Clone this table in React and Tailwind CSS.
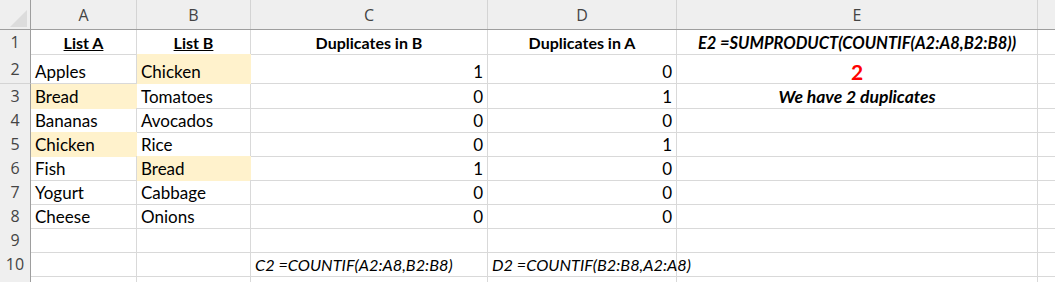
import React from "react";

const COLS = "grid-cols-[31px_106px_114px_237px_189px_361px_1fr]";
const FONT = { fontFamily: "Lato, 'Liberation Sans', sans-serif" };

const rows = [
  { h: "h-[24px]", cells: [
    { t: "List A", cls: "justify-center font-bold underline text-[16px]" },
    { t: "List B", cls: "justify-center font-bold underline text-[16px]" },
    { t: "Duplicates in B", cls: "justify-center font-bold text-[16px]" },
    { t: "Duplicates in A", cls: "justify-center font-bold text-[16px]" },
    { t: "E2 =SUMPRODUCT(COUNTIF(A2:A8,B2:B8))", cls: "justify-center font-bold italic text-[16.5px]" },
  ]},
  { h: "h-[30px]", cells: [
    { t: "Apples" },
    { t: "Chicken", hl: true },
    { t: "1", cls: "justify-end" },
    { t: "0", cls: "justify-end" },
    { t: "2", cls: "justify-center font-bold text-[21px]", red: true },
  ]},
  { h: "h-[24px]", cells: [
    { t: "Bread", hl: true },
    { t: "Tomatoes" },
    { t: "0", cls: "justify-end" },
    { t: "1", cls: "justify-end" },
    { t: "We have 2 duplicates", cls: "justify-center font-bold italic text-[17.5px]" },
  ]},
  { h: "h-[24px]", cells: [
    { t: "Bananas" }, { t: "Avocados" },
    { t: "0", cls: "justify-end" }, { t: "0", cls: "justify-end" }, { t: "" },
  ]},
  { h: "h-[24px]", cells: [
    { t: "Chicken", hl: true }, { t: "Rice" },
    { t: "0", cls: "justify-end" }, { t: "1", cls: "justify-end" }, { t: "" },
  ]},
  { h: "h-[24px]", cells: [
    { t: "Fish" }, { t: "Bread", hl: true },
    { t: "1", cls: "justify-end" }, { t: "0", cls: "justify-end" }, { t: "" },
  ]},
  { h: "h-[24px]", cells: [
    { t: "Yogurt" }, { t: "Cabbage" },
    { t: "0", cls: "justify-end" }, { t: "0", cls: "justify-end" }, { t: "" },
  ]},
  { h: "h-[24px]", cells: [
    { t: "Cheese" }, { t: "Onions" },
    { t: "0", cls: "justify-end" }, { t: "0", cls: "justify-end" }, { t: "" },
  ]},
  { h: "h-[24px]", cells: [{ t: "" }, { t: "" }, { t: "" }, { t: "" }, { t: "" }] },
  { h: "h-[24px]", cells: [
    { t: "" }, { t: "" },
    { t: "C2 =COUNTIF(A2:A8,B2:B8)", cls: "italic text-[16.3px]" },
    { t: "D2 =COUNTIF(B2:B8,A2:A8)", cls: "italic text-[16.3px]" },
    { t: "" },
  ]},
  { h: "h-[7px]", cells: [{ t: "" }, { t: "" }, { t: "" }, { t: "" }, { t: "" }] },
];

function Cell({ c }) {
  return (
    <div
      className={
        "flex items-end px-[4px] pb-[1px] border-r border-b whitespace-nowrap overflow-visible leading-[20px] " +
        (c.red ? "text-[#ff0000] " : "text-black ") +
        (c.cls && c.cls.includes("text-[") ? "" : "text-[17px] ") +
        (c.hl ? "bg-[#fff2cc] border-[#fff2cc] " : "border-[#d9d9d9] ") +
        (c.cls || "")
      }
    >
      {c.t}
    </div>
  );
}

export default function App() {
  const letters = ["A", "B", "C", "D", "E"];
  return (
    <div className="w-[1055px] h-[282px] overflow-hidden bg-white" style={FONT}>
      <div className={"grid " + COLS + " h-[30px] bg-[#efefef] border-b border-[#9e9e9e]"}>
        <div className="relative border-r border-[#9e9e9e]">
          <svg className="absolute left-[10px] top-[10px]" width="17" height="17" viewBox="0 0 17 17">
            <polygon points="17,0 17,17 0,17" fill="#dcdcdc" />
          </svg>
        </div>
        {letters.map((l) => (
          <div key={l} className="flex items-center justify-center border-r border-[#d4d4d4] text-[16px] text-[#444]" style={{ fontFamily: "'Open Sans', sans-serif" }}>
            {l}
          </div>
        ))}
        <div />
      </div>
      {rows.map((r, i) => (
        <div key={i} className={"grid " + COLS + " " + r.h}>
          <div
            className="flex items-center justify-center bg-[#efefef] border-r border-[#9e9e9e] border-b border-b-[#d4d4d4] text-[16px] text-[#444]"
            style={{ fontFamily: "'Open Sans', sans-serif" }}
          >
            {i < 10 ? i + 1 : ""}
          </div>
          {r.cells.map((c, j) => (
            <Cell key={j} c={c} />
          ))}
          <div className="border-b border-[#d9d9d9]" />
        </div>
      ))}
    </div>
  );
}
